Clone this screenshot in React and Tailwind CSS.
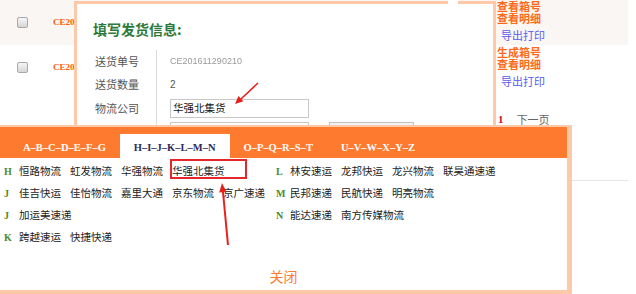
import React from 'react';

const cn = "font-['Noto_Sans_CJK_SC','Liberation_Sans',sans-serif]";
const serif = "font-['Liberation_Serif',serif]";

const Checkbox = () => (
  <div className="w-[11px] h-[11px] rounded-[2px] border border-[#a8a8a8] bg-linear-to-b from-[#f6f6f6] to-[#d6d6d6]" />
);

const tabs = ['A–B–C–D–E–F–G', 'H–I–J–K–L–M–N', 'O–P–Q–R–S–T', 'U–V–W–X–Y–Z'];

const leftGroups = [
  { letter: 'H', items: ['恒路物流', '虹发物流', '华强物流', '华强北集货'] },
  { letter: 'J', items: ['佳吉快运', '佳怡物流', '嘉里大通', '京东物流', '京广速递'] },
  { letter: 'J', items: ['加运美速递'] },
  { letter: 'K', items: ['跨越速运', '快捷快递'] },
];

const rightGroups = [
  { letter: 'L', items: ['林安速运', '龙邦快运', '龙兴物流', '联昊通速递'] },
  { letter: 'M', items: ['民邦速递', '民航快递', '明亮物流'] },
  { letter: 'N', items: ['能达速递', '南方传媒物流'] },
];

const Group = ({ letter, items, wide }) => (
  <div className="h-[22px] flex items-center">
    <span className={`${wide ? 'w-[15px]' : 'w-[14px]'} ${serif} text-[10px] font-bold text-[#4d8a1e]`}>{letter}</span>
    <div className="flex gap-x-[9px]">
      {items.map((it) => (
        <span key={it} className={`relative leading-[16px] text-[10.5px] text-[#222] ${cn}`}>
          {it}
          {it === '华强北集货' && (
            <span className="absolute left-[-2px] right-[-22px] top-[-4px] bottom-0 border-2 border-[#e5262b]" />
          )}
        </span>
      ))}
    </div>
  </div>
);

const ActionCell = ({ first }) => (
  <div className={`flex-1 pl-[2px] ${first ? '' : 'pt-[1px]'} ${cn} text-[11px]`}>
    <div className="leading-[12px] font-bold text-[#ff6a1a]">{first ? '查看箱号' : '生成箱号'}</div>
    <div className="leading-[12px] font-bold text-[#ff6a1a]">查看明细</div>
    <div className="leading-[12px] mt-[5px] pl-[4px] text-[#5a5af0]">导出打印</div>
  </div>
);

const OrderNo = ({ no }) => (
  <div className="w-[450px] pl-[8px] flex items-center">
    <span className={`block w-[21px] overflow-hidden whitespace-nowrap ${serif} text-[9px] font-bold text-[#ff5a0a]`}>{no}</span>
  </div>
);

export default function App() {
  return (
    <div className="relative w-[636px] h-[294px] overflow-hidden bg-white">
      {/* table behind the dialogs */}
      <div className="w-[628px]">
        <div className="h-[45px] bg-[#faf6f3] flex">
          <div className="w-[45px] flex items-center justify-center"><Checkbox /></div>
          <OrderNo no="CE201611290210" />
          <ActionCell first />
        </div>
        <div className="h-[45px] flex">
          <div className="w-[45px] flex items-center justify-center"><Checkbox /></div>
          <OrderNo no="CE201611290211" />
          <ActionCell />
        </div>
        <div className="mt-[22px] h-[14px] flex items-center pl-[498px]">
          <span className={`${serif} text-[11px] font-bold text-[#e0002a]`}>1</span>
          <span className={`ml-[13px] ${cn} text-[11px] text-[#666]`}>下一页</span>
        </div>
        <div className="mt-[54px] border-t border-[#e6e6e6]" />
      </div>

      {/* shipping info dialog */}
      <div className="absolute left-[74px] top-[1px] w-[422px] h-[140px] bg-white border-[3px] border-[#fdc9a9]">
        <div className={`pl-[16px] pt-[16px] text-[14px] leading-[18px] font-bold text-[#2b7a3b] ${cn}`}>填写发货信息:</div>
        <div className={`flex mt-[12px] pl-[18px] ${cn} text-[11px]`}>
          <div className="w-[61px] text-[#555]">
            <div className="h-[23px] flex items-center">送货单号</div>
            <div className="h-[23px] flex items-center">送货数量</div>
            <div className="h-[24px] flex items-center">物流公司</div>
          </div>
          <div className="border-l border-[#dcdcdc] pl-[13px] h-[80px]">
            <div className="h-[23px] flex items-center font-['Liberation_Sans',sans-serif] text-[9px] text-[#9a9a9a] blur-[0.4px]">CE201611290210</div>
            <div className="h-[23px] flex items-center font-['Liberation_Sans',sans-serif] text-[10px] text-[#555]">2</div>
            <div className="h-[24px] flex items-center">
              <div className="w-[139px] h-[19px] border border-[#c8c8c8] pl-[2px] flex items-center text-[10.5px] text-[#111]">华强北集货</div>
            </div>
            <div className="flex mt-[2px]">
              <div className="w-[139px] h-[19px] border border-[#c8c8c8]" />
              <div className="ml-[20px] w-[85px] h-[19px] border border-[#c0c0c0] bg-[#f2f2f2]" />
            </div>
          </div>
        </div>
      </div>
      <div className="absolute left-[448px] top-0 w-[10px] h-[4px] bg-white" />

      {/* logistics picker popup */}
      <div className="absolute left-0 top-[125px] w-[572px] h-[169px] bg-white border-t-2 border-r-[5px] border-b-4 border-[#fdc9a9]">
        <div className="h-[31px] bg-[#fe7a2e] flex items-end pl-[9px]">
          {tabs.map((t, i) => (
            <div
              key={t}
              className={`h-[24px] px-[14px] pt-[8px] leading-[12px] ${serif} text-[10.5px] font-bold whitespace-nowrap ${i === 1 ? 'bg-white text-[#2c2c5c]' : 'text-white'}`}
            >
              {t}
            </div>
          ))}
        </div>
        <div className="flex pt-[2px]">
          <div className="w-[276px] pl-[4px]">
            {leftGroups.map((g, i) => <Group key={i} {...g} wide />)}
          </div>
          <div>
            {rightGroups.map((g, i) => <Group key={i} {...g} />)}
          </div>
        </div>
        <div className={`mt-[20px] text-center text-[14px] leading-[16px] text-[#fe7a2e] ${cn}`}>关闭</div>
      </div>

      {/* red annotation arrows */}
      <svg className="absolute inset-0 pointer-events-none" width="636" height="294" viewBox="0 0 636 294">
        <line x1="258" y1="83" x2="241" y2="99" stroke="#e8201c" strokeWidth="1.6" />
        <polygon points="235,104 243.4,101.3 238.4,96" fill="#e8201c" />
        <line x1="228" y1="245" x2="222.9" y2="191" stroke="#e8201c" strokeWidth="2" />
        <polygon points="222,183 226.6,192 219.2,192.6" fill="#e8201c" />
      </svg>
    </div>
  );
}
